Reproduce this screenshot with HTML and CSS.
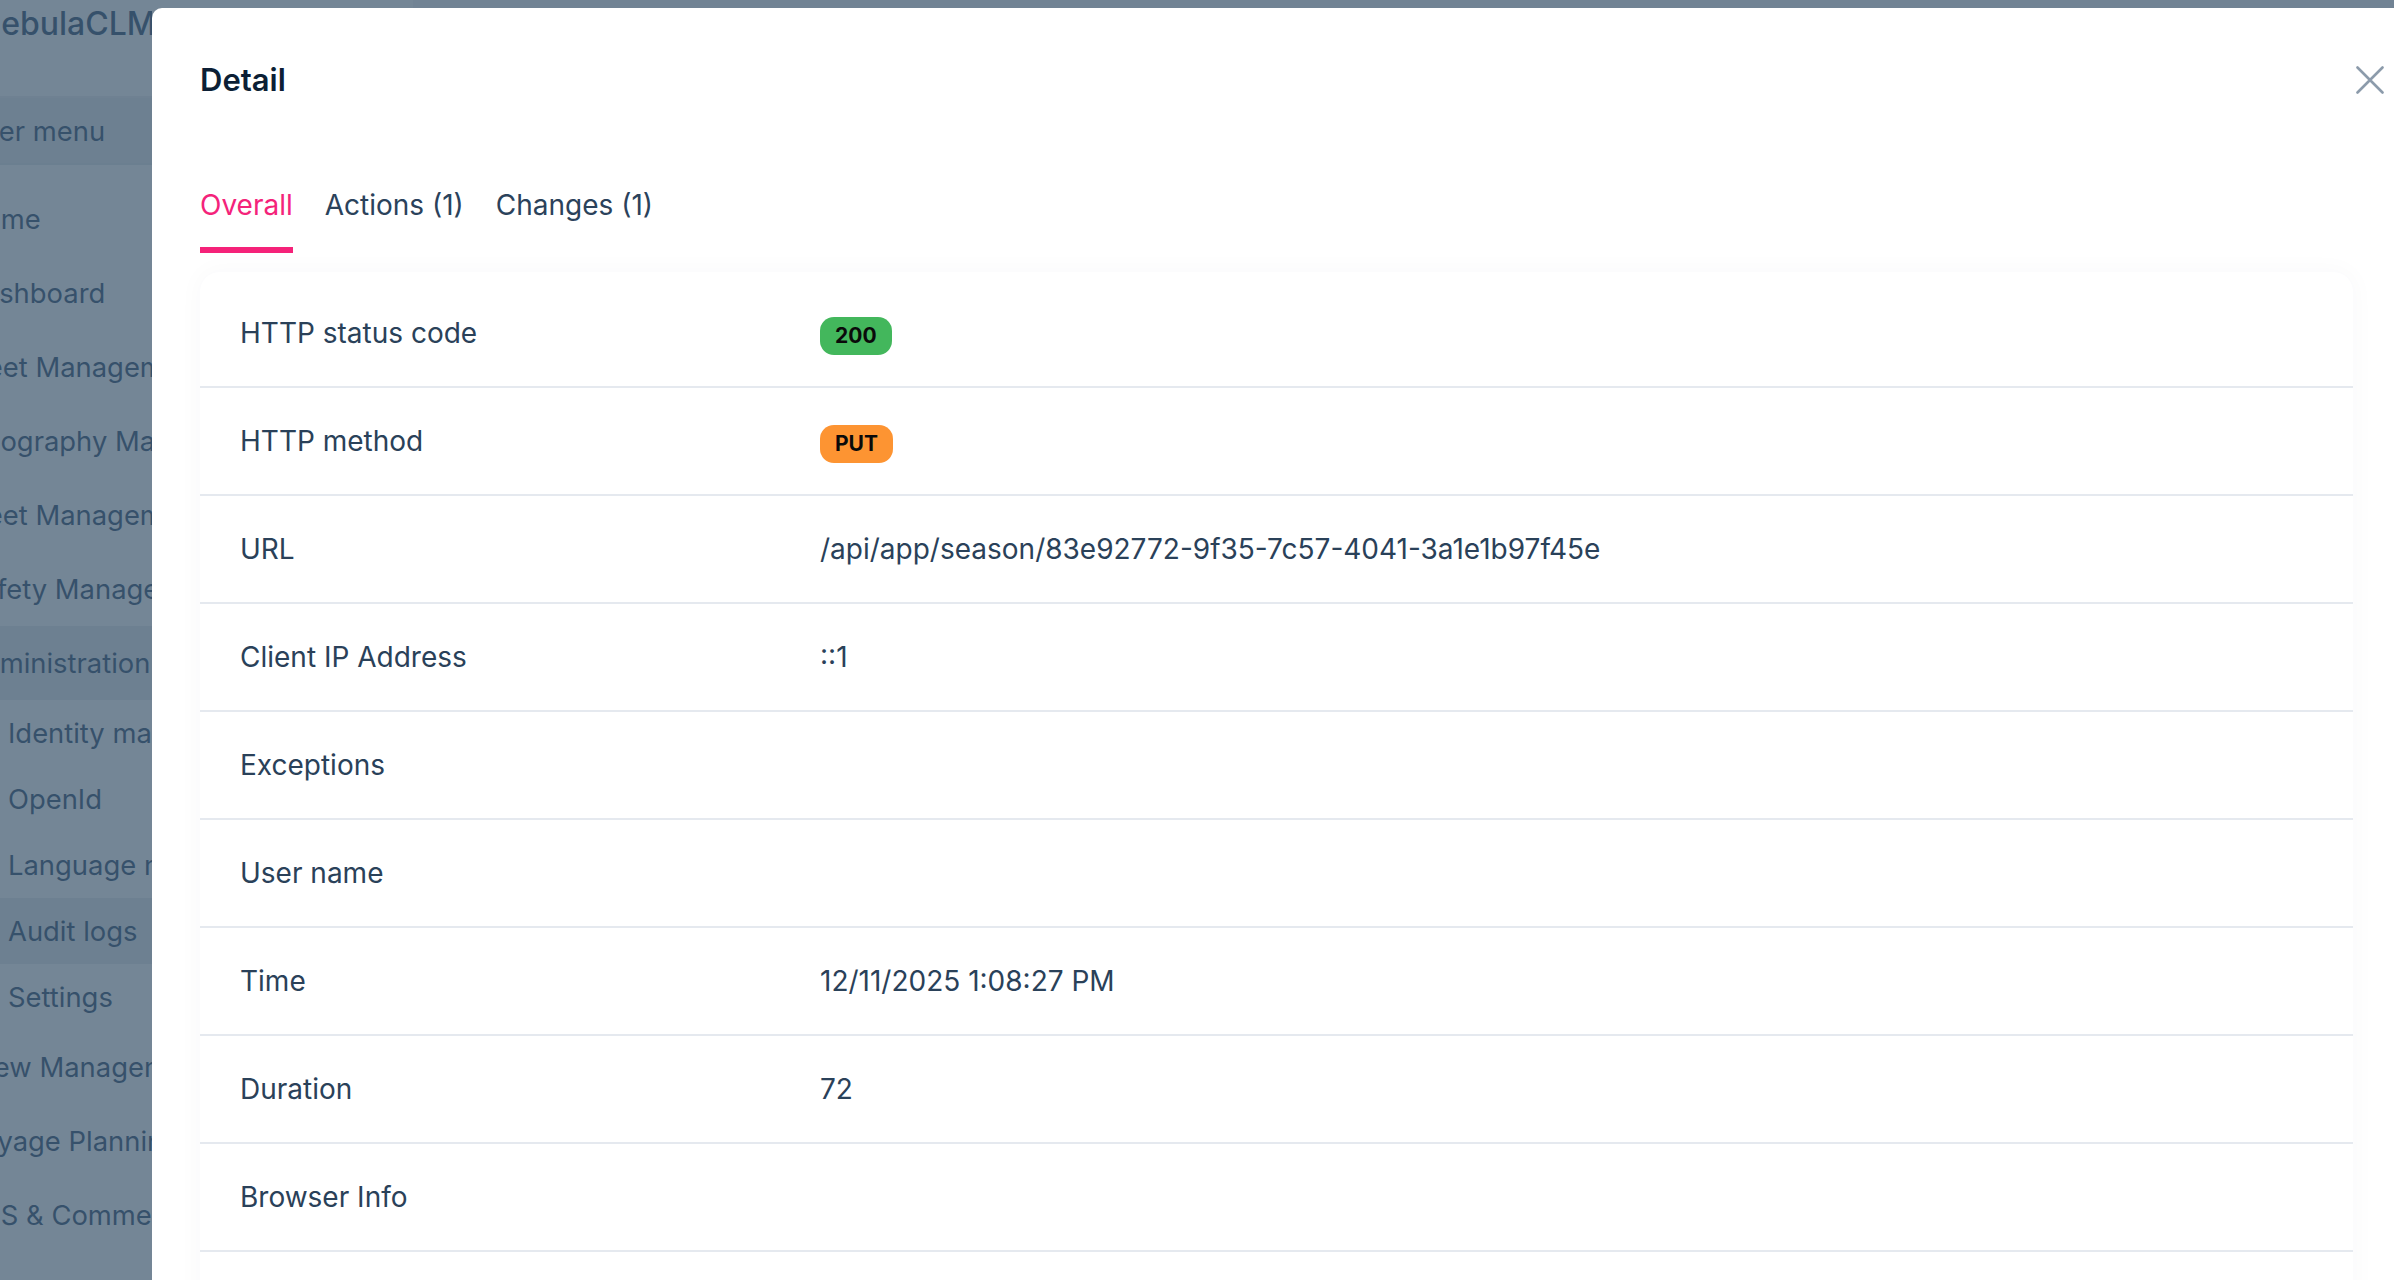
FILE: index.html
```html
<!DOCTYPE html>
<html lang="en">
<head>
<meta charset="utf-8">
<title>Audit log detail</title>
<link rel="stylesheet" href="styles.css">
</head>
<body>
<div class="app">
  <aside class="sidebar">
    <div class="logo">NebulaCLM</div>
    <div class="menu-head">User menu</div>
    <nav class="menu">
      <div class="item">Home</div>
      <div class="item">Dashboard</div>
      <div class="item">Fleet Management</div>
      <div class="item">Geography Management</div>
      <div class="item">Fleet Management</div>
      <div class="item">Safety Management</div>
      <div class="item item-open">Administration</div>
      <div class="sub">Identity management</div>
      <div class="sub">OpenId</div>
      <div class="sub">Language management</div>
      <div class="sub sub-active">Audit logs</div>
      <div class="sub">Settings</div>
      <div class="item">Crew Management</div>
      <div class="item">Voyage Planning</div>
      <div class="item">EHS &amp; Commercial</div>
      <div class="item">Reports</div>
    </nav>
  </aside>
  <main class="main"></main>
</div>
<div class="backdrop"></div>
<section class="drawer">
  <header class="drawer-head">
    <h1 class="title">Detail</h1>
    <button class="close" aria-label="Close">
      <svg width="28" height="28" viewBox="0 0 28 28"><path d="M1.5 1.5L26.5 26.5M26.5 1.5L1.5 26.5" stroke="currentColor" stroke-width="2.6" stroke-linecap="round" fill="none"/></svg>
    </button>
  </header>
  <div class="content">
    <div class="tabs">
      <div class="tab active">Overall</div>
      <div class="tab">Actions (1)</div>
      <div class="tab">Changes (1)</div>
    </div>
    <div class="card">
      <div class="row"><div class="label">HTTP status code</div><div class="value"><span class="badge ok">200</span></div></div>
      <div class="row"><div class="label">HTTP method</div><div class="value"><span class="badge put">PUT</span></div></div>
      <div class="row"><div class="label">URL</div><div class="value">/api/app/season/83e92772-9f35-7c57-4041-3a1e1b97f45e</div></div>
      <div class="row"><div class="label">Client IP Address</div><div class="value">::1</div></div>
      <div class="row"><div class="label">Exceptions</div><div class="value"></div></div>
      <div class="row"><div class="label">User name</div><div class="value"></div></div>
      <div class="row"><div class="label">Time</div><div class="value">12/11/2025 1:08:27 PM</div></div>
      <div class="row"><div class="label">Duration</div><div class="value">72</div></div>
      <div class="row"><div class="label">Browser Info</div><div class="value"></div></div>
      <div class="row"><div class="label">Comments</div><div class="value"></div></div>
    </div>
  </div>
</section>
</body>
</html>
```

FILE: styles.css
```css
* { box-sizing: border-box; }

html, body {
  margin: 0;
  padding: 0;
  height: 1280px;
  overflow: hidden;
  font-family: Inter, "Noto Sans", "Liberation Sans", sans-serif;
}

body { position: relative; background: #ffffff; }

.app {
  display: flex;
  height: 1280px;
}

.sidebar {
  width: 449px;
  margin-left: -36px;
  flex: none;
  background: #ffffff;
  color: #0d3057;
  font-size: 27.4px;
  overflow: hidden;
}

.sidebar > .logo,
.sidebar > .menu-head,
.menu > div {
  width: 188px;
  overflow: hidden;
}

.logo {
  height: 98px;
  padding: 5px 0 0 13px;
  font-size: 32px;
  line-height: 38px;
  font-weight: 500;
  border-bottom: 2px solid #e9ecee;
  white-space: nowrap;
}

.menu-head {
  height: 67px;
  display: flex;
  align-items: center;
  background: #e3e7eb;
  border-bottom: 2px solid #dde2e6;
  white-space: nowrap;
}

.menu {
  display: flex;
  flex-direction: column;
  padding-top: 17px;
}

.item {
  height: 74px;
  display: flex;
  align-items: center;
  white-space: nowrap;
}

.item-open { background: #e3e7eb; }

.sub {
  height: 66px;
  display: flex;
  align-items: center;
  padding-left: 44px;
  white-space: nowrap;
}

.sub-active { background: #e3e7eb; }

.main {
  flex: 1;
  background: #f1f4f7;
}

.backdrop {
  position: absolute;
  inset: 0;
  background: rgba(68, 92, 114, 0.744);
}

.drawer {
  position: absolute;
  left: 152px;
  top: 8px;
  right: 0;
  bottom: 0;
  background: #ffffff;
  border-top-left-radius: 10px;
  padding: 0 10px 0 48px;
  display: flex;
  flex-direction: column;
  overflow: hidden;
}

.drawer-head {
  height: 143px;
  flex: none;
  display: flex;
  align-items: center;
  justify-content: space-between;
}

.title {
  margin: 0;
  font-size: 31px;
  line-height: 40px;
  font-weight: 600;
  color: #0c1f35;
}

.close {
  width: 28px;
  height: 28px;
  padding: 0;
  border: 0;
  background: transparent;
  color: #8c9bab;
  display: flex;
}

.content {
  padding-right: 31px;
  display: flex;
  flex-direction: column;
}

.tabs {
  display: flex;
  gap: 32px;
}

.tab {
  font-size: 28px;
  line-height: 40px;
  padding: 34px 0 22px;
  border-bottom: 6px solid transparent;
  color: #2b425b;
  white-space: nowrap;
}

.tab.active {
  color: #f4237a;
  border-bottom-color: #f52279;
}

.card {
  margin-top: 19px;
  padding-top: 8px;
  background: #ffffff;
  border-radius: 20px;
  box-shadow: 0 0 22px 4px rgba(20, 40, 70, 0.025);
}

.row {
  height: 108px;
  display: grid;
  grid-template-columns: 620px 1fr;
  align-items: center;
  border-bottom: 2px solid #e5e9ef;
  font-size: 28px;
  color: #2a4159;
}

.label { padding-left: 40px; }

.value {
  display: flex;
  align-items: center;
  white-space: nowrap;
}

.badge {
  display: inline-block;
  height: 38px;
  line-height: 38px;
  margin-top: 6px;
  padding: 0 15px;
  border-radius: 14px;
  font-size: 21px;
  font-weight: 700;
  color: #0a0a0a;
}

.badge.ok { background: #43b75c; }
.badge.put { background: #fd9432; }
```
